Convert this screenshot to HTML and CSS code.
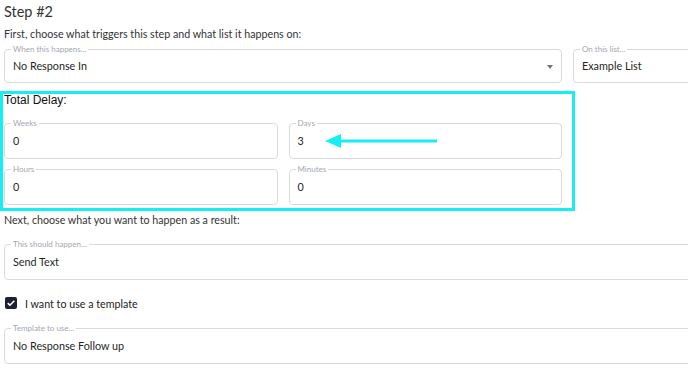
FILE: index.html
```html
<!DOCTYPE html>
<html lang="en">
<head>
    <meta charset="UTF-8">
    <meta name="viewport" content="width=device-width, initial-scale=1.0">
    <title>Step #2</title>
    <link rel="stylesheet" href="styles.css">
</head>
<body>
    <div class="page">
        <h1 class="step-title">Step #2</h1>
        <p class="hint">First, choose what triggers this step and what list it happens on:</p>

        <div class="trigger-row">
            <div class="field field-select">
                <span class="label">When this happens...</span>
                <span class="value">No Response In</span>
                <span class="caret"></span>
            </div>
            <div class="field field-list">
                <span class="label">On this list...</span>
                <span class="value">Example List</span>
            </div>
        </div>

        <div class="delay">
            <div class="delay-title">Total Delay:</div>
            <div class="delay-grid">
                <div class="field">
                    <span class="label">Weeks</span>
                    <span class="value">0</span>
                </div>
                <div class="field">
                    <span class="label">Days</span>
                    <span class="value">3</span>
                    <svg class="arrow" width="113" height="16" viewBox="0 0 113 16">
                        <polygon points="0,8 16,1 16,15" fill="#15eef3"/>
                        <rect x="14" y="6.5" width="98" height="3" fill="#15eef3"/>
                    </svg>
                </div>
                <div class="field">
                    <span class="label">Hours</span>
                    <span class="value">0</span>
                </div>
                <div class="field">
                    <span class="label">Minutes</span>
                    <span class="value">0</span>
                </div>
            </div>
        </div>

        <p class="hint hint-next">Next, choose what you want to happen as a result:</p>

        <div class="field field-wide field-action">
            <span class="label">This should happen...</span>
            <span class="value">Send Text</span>
        </div>

        <label class="check-row">
            <span class="checkbox">
                <svg width="12" height="12" viewBox="0 0 12 12">
                    <path d="M2.7 6.1 L4.9 8.2 L9.3 3.7" fill="none" stroke="#fff" stroke-width="1.6"/>
                </svg>
            </span>
            I want to use a template
        </label>

        <div class="field field-wide field-template">
            <span class="label">Template to use...</span>
            <span class="value">No Response Follow up</span>
        </div>
    </div>
</body>
</html>
```

FILE: styles.css
```css
body {
    margin: 0;
    padding: 0;
    background-color: #fff;
    font-family: "Lato", "Noto Sans", sans-serif;
    color: #2b2d33;
    overflow: hidden;
}

.page {
    width: 800px;
    padding-left: 4px;
}

.step-title {
    margin: 2px 0 0 0;
    font-size: 14.5px;
    line-height: 20px;
    font-weight: 400;
    color: #333;
}

.hint {
    margin: 4px 0 0 0;
    font-size: 10.7px;
    line-height: 16px;
    color: #333;
}

.hint-next {
    margin-top: 1px;
}

/* outlined inputs, label sits on the top border */
.field {
    position: relative;
    display: flex;
    align-items: center;
    height: 36px;
    padding: 0 8px 2px 8px;
    border: 1px solid #dadada;
    border-radius: 4px;
    box-sizing: border-box;
}

.field .label {
    position: absolute;
    top: -6px;
    left: 6px;
    padding: 0 2px;
    background-color: #fff;
    font-size: 8px;
    line-height: 10px;
    color: #a3a7b0;
}

.field .value {
    font-size: 10.8px;
    color: #1e1f24;
}

.trigger-row {
    display: flex;
    gap: 11px;
    margin-top: 7px;
}

.field-select {
    width: 558px;
    height: 34px;
}

.field-list {
    width: 200px;
    height: 34px;
}

.caret {
    position: absolute;
    right: 8px;
    top: 15px;
    width: 0;
    height: 0;
    border-left: 3.5px solid transparent;
    border-right: 3.5px solid transparent;
    border-top: 4px solid #757575;
}

/* highlighted delay block */
.delay {
    width: 575px;
    margin: 8px 0 0 -4px;
    padding: 0 10px 3px 1px;
    border: 3px solid #15eef3;
    box-sizing: border-box;
}

.delay-title {
    font-family: "Liberation Sans", Arial, sans-serif;
    font-size: 12px;
    line-height: 13px;
    color: #111;
}

.delay-grid {
    display: grid;
    grid-template-columns: 1fr 1fr;
    column-gap: 11px;
    row-gap: 10px;
    margin-top: 16px;
}

.arrow {
    position: absolute;
    left: 35px;
    top: 9px;
}

.field-wide {
    width: 760px;
}

.field-action {
    margin-top: 16px;
}

.check-row {
    display: flex;
    align-items: center;
    gap: 8px;
    margin-top: 15px;
    height: 16px;
    padding-left: 1px;
    font-size: 10.7px;
    color: #222;
}

.checkbox {
    display: flex;
    width: 12px;
    height: 12px;
    border-radius: 2px;
    background-color: #1b2034;
}

.field-template {
    margin-top: 17px;
}
```
